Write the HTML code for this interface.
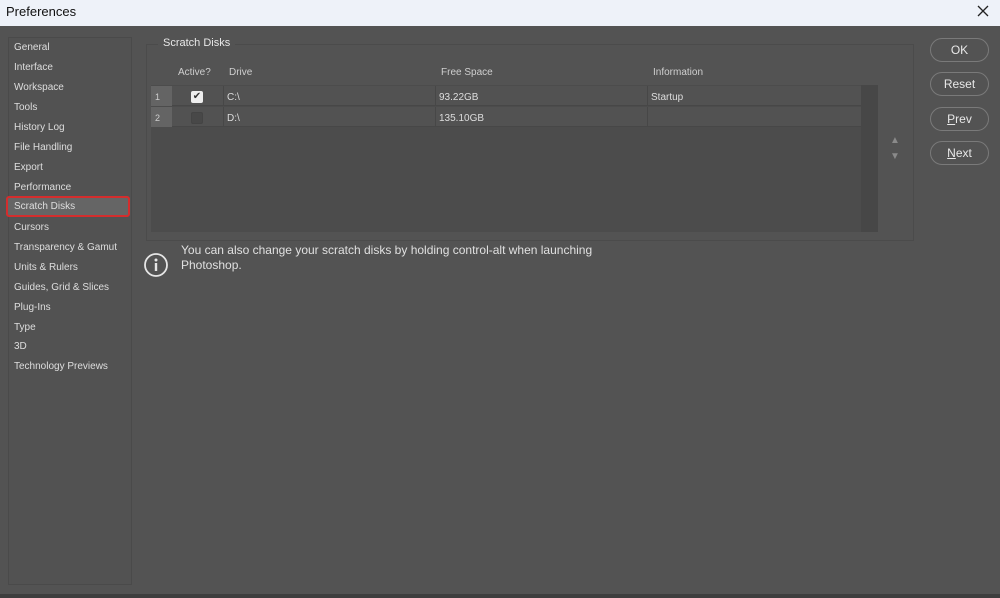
<!DOCTYPE html>
<html><head><style>
*{margin:0;padding:0;box-sizing:border-box}
body{width:1000px;height:598px;background:#535353;font-family:"Liberation Sans",sans-serif;position:relative;overflow:hidden;color:#e0e0e0}
.title{position:absolute;left:0;top:0;width:1000px;height:26px;background:#eef2f9;color:#111;font-size:13px;line-height:24px;padding-left:6px}
.side{position:absolute;left:8px;top:37px;width:124px;height:548px;border:1px solid #4a4a4a;background:#525252}
.side div{position:absolute;left:5px;font-size:10px;color:#dedede;height:20px;line-height:18px}
.sel{left:-3px!important;width:124px;background:#656565;border:2px solid #d42d2d;border-radius:3px;padding-left:6px}
.group{position:absolute;left:146px;top:44px;width:768px;height:197px;border:1px solid #4b4b4b}
.gt{position:absolute;left:158px;top:37px;background:#535353;padding:0 5px;font-size:11px;color:#e8e8e8}
.hd{position:absolute;top:67px;font-size:10px;color:#cfcfcf}
.table{position:absolute;left:151px;top:85px;width:727px;height:147px;background:#4c4c4c}
.scr{position:absolute;left:861px;top:85px;width:17px;height:147px;background:#474747}
.row{position:absolute;left:151px;width:710px;height:20px;background:#525252;border-bottom:1px solid #474747}
.num{position:absolute;left:0;top:0;width:21px;height:20px;background:#646464;font-size:9px;color:#cfcfcf;padding:6px 0 0 4px}
.cell{position:absolute;top:0;height:20px;border-left:1px solid #474747;font-size:10px;color:#ddd;padding:6px 0 0 3px}
.cb{position:absolute;left:40px;top:5px;width:12px;height:12px;border-radius:2px}
.btn{position:absolute;left:930px;width:59px;height:24px;border:1px solid #7a7a7a;border-radius:12px;font-size:12px;color:#e8e8e8;text-align:center;line-height:22px}
.info{position:absolute;left:181px;top:243px;font-size:12px;color:#e0e0e0;line-height:15px}
</style></head><body>
<div class="title">Preferences</div>
<svg style="position:absolute;left:977px;top:5px" width="12" height="12"><path d="M1 1L11 11M11 1L1 11" stroke="#222" stroke-width="1.3"/></svg>
<div class="side">
<div style="top:1px">General</div>
<div style="top:21px">Interface</div>
<div style="top:41px">Workspace</div>
<div style="top:61px">Tools</div>
<div style="top:81px">History Log</div>
<div style="top:101px">File Handling</div>
<div style="top:121px">Export</div>
<div style="top:141px">Performance</div>
<div class="sel" style="top:158px;height:21px">Scratch Disks</div>
<div style="top:181px">Cursors</div>
<div style="top:201px">Transparency &amp; Gamut</div>
<div style="top:221px">Units &amp; Rulers</div>
<div style="top:241px">Guides, Grid &amp; Slices</div>
<div style="top:261px">Plug-Ins</div>
<div style="top:281px">Type</div>
<div style="top:300px">3D</div>
<div style="top:320px">Technology Previews</div>
</div>
<div class="group"></div>
<div class="gt">Scratch Disks</div>
<div class="hd" style="left:178px">Active?</div>
<div class="hd" style="left:229px">Drive</div>
<div class="hd" style="left:441px">Free Space</div>
<div class="hd" style="left:653px">Information</div>
<div class="table"></div>
<div class="scr"></div>
<div class="row" style="top:86px"><div class="num">1</div>
<div class="cb" style="background:#eee;color:#333;font-size:10px;text-align:center;line-height:12px">✔</div>
<div class="cell" style="left:72px;width:212px">C:\</div>
<div class="cell" style="left:284px;width:212px">93.22GB</div>
<div class="cell" style="left:496px;width:214px">Startup</div></div>
<div class="row" style="top:107px"><div class="num">2</div>
<div class="cb" style="background:#484848;border:1px solid #444"></div>
<div class="cell" style="left:72px;width:212px">D:\</div>
<div class="cell" style="left:284px;width:212px">135.10GB</div>
<div class="cell" style="left:496px;width:214px"></div></div>
<div style="position:absolute;left:890px;top:133px;font-size:10px;color:#8a8a8a;line-height:16px">▲<br>▼</div>
<div class="btn" style="top:38px">OK</div>
<div class="btn" style="top:72px">Reset</div>
<div class="btn" style="top:107px"><u>P</u>rev</div>
<div class="btn" style="top:141px"><u>N</u>ext</div>
<svg style="position:absolute;left:143px;top:252px" width="26" height="26"><circle cx="13" cy="13" r="11" fill="none" stroke="#e6e6e6" stroke-width="1.8"/><circle cx="13" cy="8" r="1.5" fill="#e6e6e6"/><rect x="11.8" y="11" width="2.4" height="8" fill="#e6e6e6"/></svg>
<div class="info">You can also change your scratch disks by holding control-alt when launching<br>Photoshop.</div>
<div style="position:absolute;left:0;top:594px;width:1000px;height:4px;background:#3e3e3e"></div>
</body></html>
